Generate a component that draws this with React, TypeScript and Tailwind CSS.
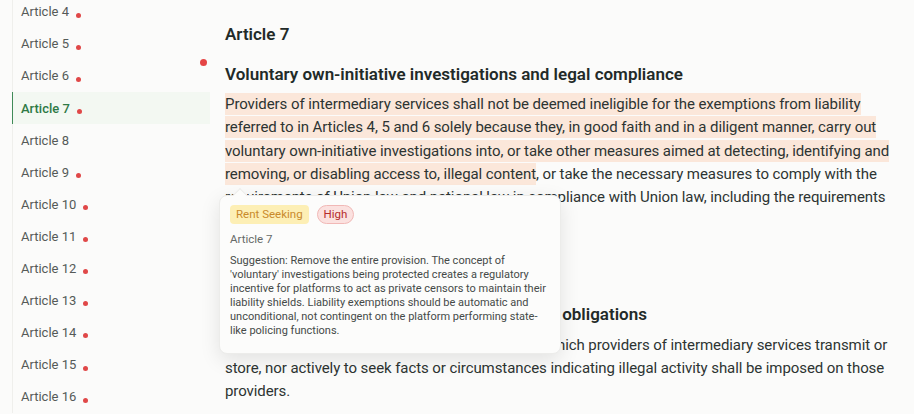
import React from "react";

const articles = [4, 5, 6, 7, 8, 9, 10, 11, 12, 13, 14, 15, 16];
const flagged = new Set([4, 5, 6, 7, 9, 10, 11, 12, 13, 14, 15, 16]);

export default function App() {
  return (
    <div
      className="w-[914px] h-[414px] overflow-hidden bg-[#fbfbfa] flex text-[#2b3230]"
      style={{ fontFamily: "Roboto, 'Noto Sans', sans-serif" }}
    >
      <aside className="w-[210px] shrink-0 pl-3">
        <ul className="-mt-[4px] border-l border-[#efefec]">
          {articles.map((n) => {
            const active = n === 7;
            return (
              <li
                key={n}
                className={
                  "h-[32.1px] flex items-center pl-2 text-[13px] -ml-px " +
                  (active
                    ? "bg-[#f3f8f2] border-l border-[#3f8a57] text-[#2f7a46] font-medium"
                    : "text-[#555a58] border-l border-transparent")
                }
              >
                <span>Article {n}</span>
                {flagged.has(n) && (
                  <span className="ml-[7px] mt-[6px] w-[5px] h-[5px] rounded-full bg-[#e04848]" />
                )}
              </li>
            );
          })}
        </ul>
      </aside>
      <main className="relative flex-1 pl-[15px] pr-[14px]">
        <span className="absolute left-[-10px] top-[59px] w-[7px] h-[7px] rounded-full bg-[#e54545]" />
        <section className="pt-[23px]">
          <h2 className="text-[17px] font-semibold leading-[22px] text-[#222a28]">Article 7</h2>
          <h3 className="mt-[18px] text-[17px] font-semibold leading-[22px] text-[#222a28]">
            Voluntary own-initiative investigations and legal compliance
          </h3>
          <p className="mt-[8px] text-[15px] tracking-[-0.08px] leading-[23.3px] text-[#2d3432]">
            <span className="bg-[#fbe7da] py-[2px]">
              Providers of intermediary services shall not be deemed ineligible for the exemptions from liability
              referred to in Articles 4, 5 and 6 solely because they, in good faith and in a diligent manner, carry out
              voluntary own-initiative investigations into, or take other measures aimed at detecting, identifying and
              removing, or disabling access to, illegal content
            </span>
            , or take the necessary measures to comply with the requirements of Union law and national law in
            compliance with Union law, including the requirements set out in this Regulation.
          </p>
        </section>
        <section className="pt-[30px]">
          <h2 className="text-[17px] font-semibold leading-[22px] text-[#222a28]">Article 8</h2>
          <h3 className="mt-[18px] text-[17px] font-semibold leading-[22px] text-[#222a28]">
            No general monitoring or active fact-finding obligations
          </h3>
          <p className="mt-[9px] text-[15px] tracking-[-0.08px] leading-[23.3px] text-[#2d3432]">
            No general obligation to monitor the information which providers of intermediary services transmit or
            store, nor actively to seek facts or circumstances indicating illegal activity shall be imposed on those
            providers.
          </p>
        </section>

        <div className="absolute left-[9px] top-[195px] w-[342px] rounded-lg bg-[#fcfcfb] border border-[#ececea] shadow-[0_6px_20px_rgba(0,0,0,0.10)] px-[10px] pt-[9px] pb-[15px]">
          <span className="absolute -top-[6px] left-[15px] w-[10px] h-[10px] rotate-45 bg-[#fcfcfb] border-l border-t border-[#ececea]" />
          <div className="flex items-center gap-[8px]">
            <span className="h-[19px] px-[6px] flex items-center rounded-[4px] bg-[#fdefb5] text-[#c98a2b] text-[11.5px]">
              Rent Seeking
            </span>
            <span className="h-[19px] px-[6px] flex items-center rounded-full bg-[#fbe1df] border border-[#f1b8b6] text-[#b52c2c] text-[11.5px]">
              High
            </span>
          </div>
          <div className="mt-[8px] text-[11.5px] leading-[14px] text-[#666a68]">Article 7</div>
          <p className="mt-[8px] text-[11px] leading-[14px] text-[#454a48]">
            Suggestion: Remove the entire provision. The concept of 'voluntary' investigations being protected creates
            a regulatory incentive for platforms to act as private censors to maintain their liability shields.
            Liability exemptions should be automatic and unconditional, not contingent on the platform performing
            state-like policing functions.
          </p>
        </div>
      </main>
    </div>
  );
}
